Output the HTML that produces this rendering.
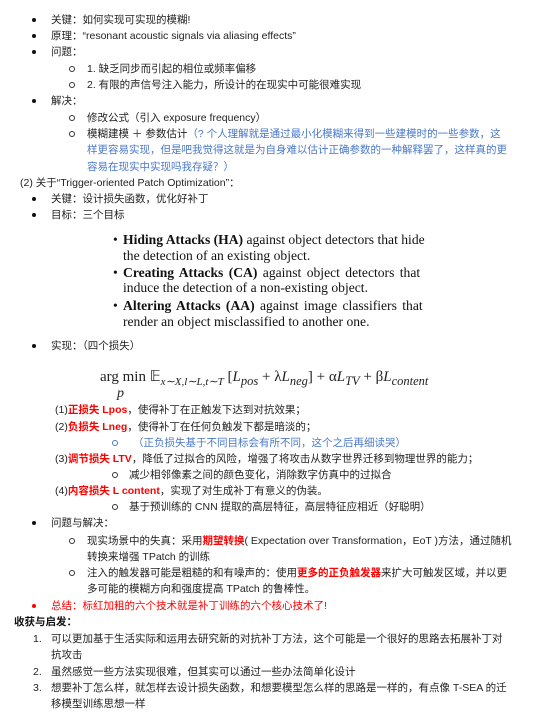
<!DOCTYPE html>
<html><head><meta charset="utf-8"><style>
body{margin:0;width:537px;height:719px;background:#fff;position:relative;overflow:hidden;font-family:"Liberation Sans","Noto Sans CJK SC",sans-serif;font-size:10.5px;color:#222;}
.l{position:absolute;white-space:nowrap;line-height:16px;}
.b{position:absolute;width:4px;height:4px;border-radius:50%;background:#111;}
.c{position:absolute;width:4px;height:4px;border-radius:50%;border:1px solid #333;}
.r{color:#f00;font-weight:bold}
.bl{color:#4a78c8}
.s{position:absolute;font-family:"Liberation Serif",serif;font-size:13.6px;line-height:17px;white-space:nowrap;color:#111}
</style></head><body>
<div class="b" style="left:32px;top:18px"></div><div class="l" style="left:51px;top:12px">关键：如何实现可实现的模糊!</div>
<div class="b" style="left:32px;top:34px"></div><div class="l" style="left:51px;top:28px">原理：“resonant acoustic signals via aliasing effects”</div>
<div class="b" style="left:32px;top:50px"></div><div class="l" style="left:51px;top:44px">问题：</div>
<div class="c" style="left:69px;top:66px"></div><div class="l" style="left:87px;top:61px">1. 缺乏同步而引起的相位或频率偏移</div>
<div class="c" style="left:69px;top:82px"></div><div class="l" style="left:87px;top:77px">2. 有限的声信号注入能力，所设计的在现实中可能很难实现</div>
<div class="b" style="left:32px;top:99px"></div><div class="l" style="left:51px;top:93px">解决：</div>
<div class="c" style="left:69px;top:115px"></div><div class="l" style="left:87px;top:110px">修改公式（引入 exposure frequency）</div>
<div class="c" style="left:69px;top:131px"></div><div class="l" style="left:87px;top:126px">模糊建模 ＋ 参数估计<span class="bl">（? 个人理解就是通过最小化模糊来得到一些建模时的一些参数，这</span></div>
<div class="l bl" style="left:87px;top:142px">样更容易实现，但是吧我觉得这就是为自身难以估计正确参数的一种解释罢了，这样真的更</div>
<div class="l bl" style="left:87px;top:159px">容易在现实中实现吗我存疑？）</div>
<div class="l" style="left:20px;top:175px">(2) 关于“Trigger-oriented Patch Optimization”：</div>
<div class="b" style="left:32px;top:197px"></div><div class="l" style="left:51px;top:191px">关键：设计损失函数，优化好补丁</div>
<div class="b" style="left:32px;top:213px"></div><div class="l" style="left:51px;top:207px">目标：三个目标</div>
<div class="s" style="left:113px;top:231px">•</div>
<div class="s" style="left:123px;top:231px"><b>Hiding Attacks (HA)</b> against object detectors that hide</div>
<div class="s" style="left:123px;top:247px">the detection of an existing object.</div>
<div class="s" style="left:113px;top:264px">•</div>
<div class="s" style="left:123px;top:264px;word-spacing:2px"><b>Creating Attacks (CA)</b> against object detectors that</div>
<div class="s" style="left:123px;top:279px">induce the detection of a non-existing object.</div>
<div class="s" style="left:113px;top:297px">•</div>
<div class="s" style="left:123px;top:297px;word-spacing:2px"><b>Altering Attacks (AA)</b> against image classifiers that</div>
<div class="s" style="left:123px;top:313px">render an object misclassified to another one.</div>
<div class="b" style="left:32px;top:344px"></div><div class="l" style="left:51px;top:338px">实现：（四个损失）</div>
<div class="l" style="left:100px;top:367px;font-family:'Liberation Serif',serif;font-size:15px;line-height:20px">arg min 𝔼<sub style="font-style:italic;font-size:11px">x∼X,l∼L,t∼T</sub> [<i>L<sub>pos</sub></i> + λ<i>L<sub>neg</sub></i>] + α<i>L<sub>TV</sub></i> + β<i>L<sub>content</sub></i></div>
<div class="l" style="left:117px;top:386px;font-family:'Liberation Serif',serif;font-size:14px;font-style:italic">p</div>
<div class="l" style="left:55px;top:402px">(1)<span class="r">正损失 Lpos</span>，使得补丁在正触发下达到对抗效果；</div>
<div class="l" style="left:55px;top:419px">(2)<span class="r">负损失 Lneg</span>，使得补丁在任何负触发下都是暗淡的；</div>
<div class="c" style="left:112px;top:440px;border-color:#4a78c8"></div><div class="l bl" style="left:133px;top:435px">（正负损失基于不同目标会有所不同，这个之后再细读哭）</div>
<div class="l" style="left:55px;top:451px">(3)<span class="r">调节损失 LTV</span>，降低了过拟合的风险，增强了将攻击从数字世界迁移到物理世界的能力；</div>
<div class="c" style="left:112px;top:472px"></div><div class="l" style="left:129px;top:467px">减少相邻像素之间的颜色变化，消除数字仿真中的过拟合</div>
<div class="l" style="left:55px;top:483px">(4)<span class="r">内容损失 L content</span>，实现了对生成补丁有意义的伪装。</div>
<div class="c" style="left:112px;top:504px"></div><div class="l" style="left:129px;top:499px">基于预训练的 CNN 提取的高层特征，高层特征应相近（好聪明）</div>
<div class="b" style="left:32px;top:521px"></div><div class="l" style="left:51px;top:515px">问题与解决：</div>
<div class="c" style="left:69px;top:538px"></div><div class="l" style="left:87px;top:533px">现实场景中的失真：采用<span class="r">期望转换</span>( Expectation over Transformation，EoT )方法，通过随机</div>
<div class="l" style="left:87px;top:549px">转换来增强 TPatch 的训练</div>
<div class="c" style="left:69px;top:570px"></div><div class="l" style="left:87px;top:565px">注入的触发器可能是粗糙的和有噪声的：使用<span class="r">更多的正负触发器</span>来扩大可触发区域，并以更</div>
<div class="l" style="left:87px;top:581px">多可能的模糊方向和强度提高 TPatch 的鲁棒性。</div>
<div class="b" style="left:32px;top:604px;background:#f00"></div><div class="l" style="left:51px;top:598px;color:#f00">总结：标红加粗的六个技术就是补丁训练的六个核心技术了!</div>
<div class="l" style="left:14px;top:614px;font-weight:bold;color:#111">收获与启发：</div>
<div class="l" style="left:33px;top:631px">1.</div><div class="l" style="left:51px;top:631px">可以更加基于生活实际和运用去研究新的对抗补丁方法，这个可能是一个很好的思路去拓展补丁对</div>
<div class="l" style="left:51px;top:647px">抗攻击</div>
<div class="l" style="left:33px;top:664px">2.</div><div class="l" style="left:51px;top:664px">虽然感觉一些方法实现很难，但其实可以通过一些办法简单化设计</div>
<div class="l" style="left:33px;top:680px">3.</div><div class="l" style="left:51px;top:680px">想要补丁怎么样，就怎样去设计损失函数，和想要模型怎么样的思路是一样的，有点像 T-SEA 的迁</div>
<div class="l" style="left:51px;top:696px">移模型训练思想一样</div>
</body></html>
